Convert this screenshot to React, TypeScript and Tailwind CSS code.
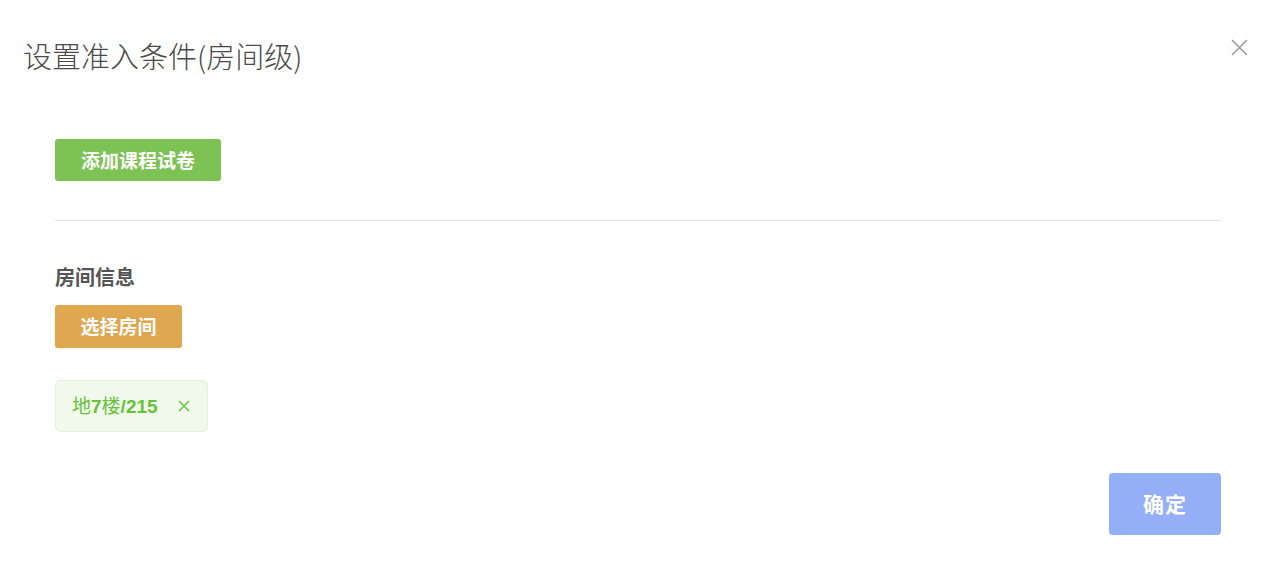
import React from "react";

const font = '"Noto Sans CJK SC", "Noto Sans", sans-serif';

export default function App() {
  return (
    <div className="w-[1280px] h-[580px] bg-white relative" style={{ fontFamily: font }}>
      <div className="flex items-start justify-between pl-[23px] pr-[32px] pt-[35px]">
        <h1 className="text-[29px] leading-[40px] font-light text-[#4a4a4a]">设置准入条件(房间级)</h1>
        <button className="mt-[4px] text-[#9a9a9a]">
          <svg width="17" height="17" viewBox="0 0 17 17" fill="none" stroke="currentColor" strokeWidth="1.5">
            <path d="M1 1L16 16M16 1L1 16" />
          </svg>
        </button>
      </div>
      <div className="px-[55px] pt-[64px]">
        <button className="h-[42px] w-[166px] rounded-[3px] bg-[#7dc254] text-white text-[19px] font-bold flex items-center justify-center">
          添加课程试卷
        </button>
        <div className="mt-[39px] h-px bg-[#e3e3ea] w-[1166px]" />
        <div className="mt-[42px] text-[20px] leading-[28px] font-bold text-[#555]">房间信息</div>
        <button className="mt-[14px] h-[43px] w-[127px] rounded-[3px] bg-[#dea750] text-white text-[19px] font-bold flex items-center justify-center">
          选择房间
        </button>
        <div className="mt-[32px] h-[52px] w-[153px] rounded-[5px] border border-[#e1f3d8] bg-[#f0f9eb] flex items-center pl-[16px] text-[#67c23a]">
          <span className="text-[19px]">地<span className="font-semibold" style={{ fontFamily: '"Liberation Sans", sans-serif' }}>7</span>楼<span className="font-semibold" style={{ fontFamily: '"Liberation Sans", sans-serif' }}>/215</span></span>
          <svg className="ml-[20px]" width="12" height="12" viewBox="0 0 12 12" fill="none" stroke="currentColor" strokeWidth="1.4">
            <path d="M1 1L11 11M11 1L1 11" />
          </svg>
        </div>
      </div>
      <div className="flex justify-end pr-[59px] mt-[41px]">
        <button className="h-[62px] w-[112px] rounded-[4px] bg-[#94aef7] text-white text-[21px] font-bold tracking-[1px]">
          确定
        </button>
      </div>
    </div>
  );
}
